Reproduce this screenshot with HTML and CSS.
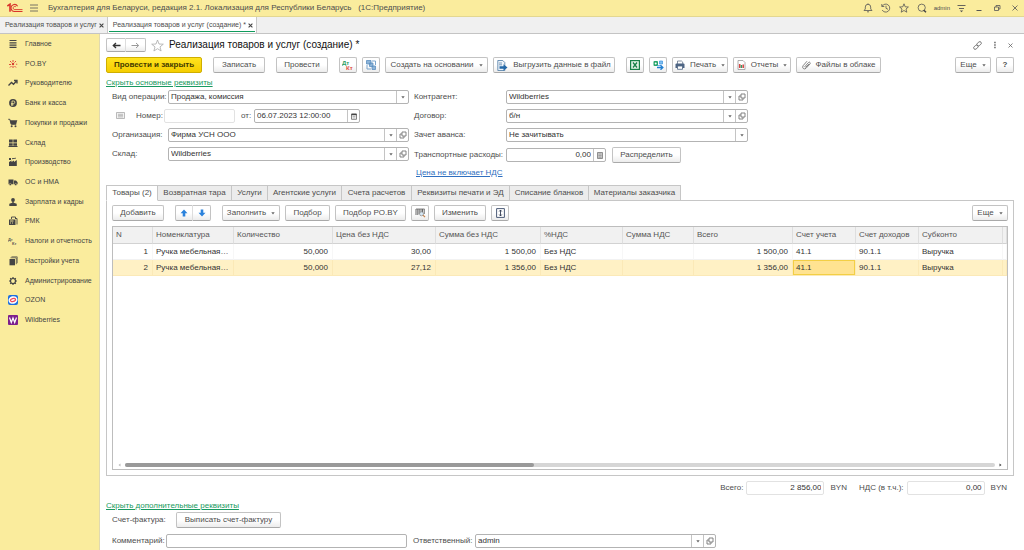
FILE: index.html
```html
<!DOCTYPE html>
<html lang="ru">
<head>
<meta charset="utf-8">
<title>Реализация товаров и услуг (создание)</title>
<link rel="stylesheet" href="styles.css">
</head>
<body>
<svg class="defs" aria-hidden="true">
  <symbol id="caret" viewBox="0 0 4 3"><path d="M.3.3h3.400L2 2.500z" fill="#666"/></symbol>
  <symbol id="open" viewBox="0 0 8 8"><path d="M3 1h4v4H3zM3 3H1v4h4V5" fill="none" stroke="#777" stroke-width=".9"/></symbol>
</svg>

<header class="titlebar">
  <svg class="logo" viewBox="0 0 16 10" role="img" aria-label="1С"><path d="M.3 3 3 1.200V8.800" fill="none" stroke="#d9342b" stroke-width="1.600"/><path d="M10.600 3.300A3.500 3.500 0 1 0 8 8.500H15.500" fill="none" stroke="#d9342b" stroke-width="1.100"/><path d="M9 4A1.600 1.600 0 1 0 8 6.600H15.500" fill="none" stroke="#d9342b" stroke-width=".9"/></svg>
  <button class="icon-btn" aria-label="Меню"><svg width="8" height="8" viewBox="0 0 8 8"><path d="M0 1h8M0 4h8M0 7h8" stroke="#555" fill="none" stroke-width=".8"/></svg></button>
  <span class="app-name">Бухгалтерия для Беларуси, редакция 2.1. Локализация для Республики Беларусь &nbsp; (1С:Предприятие)</span>
  <div class="system">
    <button class="icon-btn" aria-label="Уведомления"><svg width="10" height="10" viewBox="0 0 10 10"><path d="M1 7.500 2.300 6V4a2.700 2.700 0 0 1 5.400 0v2L9 7.500zM4 8.800h2M5 .4v1" fill="none" stroke="#555" stroke-width=".8"/></svg></button>
    <button class="icon-btn" aria-label="История"><svg width="10" height="10" viewBox="0 0 10 10"><path d="M1.200 3.200A4 4 0 1 1 1.200 7M.8 1v2.500h2.500M5 2.700V5.300l2 1" fill="none" stroke="#555" stroke-width=".8"/></svg></button>
    <button class="icon-btn" aria-label="Избранное"><svg width="10" height="10" viewBox="0 0 10 10"><path d="m5 .8 1.200 3 3.200.2L7 6l.8 3.200L5 7.500 2.200 9.200 3 6 .6 4l3.200-.2z" fill="none" stroke="#555" stroke-width=".8"/></svg></button>
    <button class="icon-btn" aria-label="Поиск"><svg width="10" height="10" viewBox="0 0 10 10"><circle cx="4.700" cy="4.700" r="3.600" fill="none" stroke="#555" stroke-width=".8"/><path d="m6.600 7 2.400 2.300" stroke="#444" stroke-width="1.500"/></svg></button>
    <span class="user">admin</span>
    <button class="icon-btn" aria-label="Настройки"><svg width="9" height="9" viewBox="0 0 9 9"><path d="M.5 1.500h8M2 4.500h5" stroke="#555" stroke-width=".9"/><path d="M2.800 6.500h3.400L4.500 8.300z" fill="#555"/></svg></button>
    <button class="icon-btn win" aria-label="Свернуть"><svg width="8" height="8" viewBox="0 0 8 8"><path d="M1.500 6.500h5" stroke="#555"/></svg></button>
    <button class="icon-btn win" aria-label="Развернуть"><svg width="8" height="8" viewBox="0 0 8 8"><path d="M1.500 3h4v3.500h-4zM3 3V1.500h4V5H5.500" fill="none" stroke="#555" stroke-width=".8"/></svg></button>
    <button class="icon-btn win" aria-label="Закрыть"><svg width="8" height="8" viewBox="0 0 8 8"><path d="m1.500 1.500 5 5m0-5-5 5" stroke="#555" stroke-width=".8"/></svg></button>
  </div>
</header>

<nav class="windows" aria-label="Открытые окна">
  <div class="window-tab"><a href="#list">Реализация товаров и услуг</a><button class="close" aria-label="Закрыть вкладку"><svg width="5" height="5" viewBox="0 0 5 5"><path d="m.6.6 3.800 3.800m0-3.800L.6 4.400" stroke="#444" stroke-width="1.100"/></svg></button></div>
  <div class="window-tab current"><a href="#doc">Реализация товаров и услуг (создание) *</a><button class="close" aria-label="Закрыть вкладку"><svg width="5" height="5" viewBox="0 0 5 5"><path d="m.6.6 3.800 3.800m0-3.800L.6 4.400" stroke="#444" stroke-width="1.100"/></svg></button></div>
</nav>

<div class="workspace">
  <nav class="sidebar" aria-label="Разделы">
    <ul>
      <li><a href="#main"><svg viewBox="0 0 10 10"><path d="M1.500 1.500h7M1.500 3.800h7M1.500 6.100h7M1.500 8.400h7" stroke="#444" stroke-width="1.200"/></svg>Главное</a></li>
      <li><a href="#poby"><svg viewBox="0 0 10 10"><path d="M5 1v2M5 7v2M1 5.500h2M2 2l1.500 1.500M8 2 6.500 3.500M2 8.500 3.500 7M8 8.500 6.500 7" stroke="#e04a3c" stroke-width="1"/><circle cx="5" cy="5" r="1.200" fill="#d63a30"/><circle cx="8.600" cy="5.300" r=".8" fill="#e87755"/></svg>PO.BY</a></li>
      <li><a href="#chief"><svg viewBox="0 0 10 10"><path d="M.5 7.500 3.500 4.500l2 1.800 3-3.300M6 2.500h3v3" fill="none" stroke="#444" stroke-width="1.300"/></svg>Руководителю</a></li>
      <li><a href="#bank"><svg viewBox="0 0 10 10"><circle cx="5" cy="5" r="3.900" fill="#444"/><path d="M4 8V3h1.500a1.200 1.200 0 0 1 0 2.600H3M3 6.800h2.500" fill="none" stroke="#faec9d" stroke-width=".8"/></svg>Банк и касса</a></li>
      <li><a href="#trade"><svg viewBox="0 0 10 10"><path d="M.3 1.300h1.500l1.400 5h5" fill="none" stroke="#444" stroke-width="1"/><path d="M2 2.200h7.300L8.200 6H3z" fill="#444"/><circle cx="3.700" cy="8.200" r="1" fill="#444"/><circle cx="7.500" cy="8.200" r="1" fill="#444"/></svg>Покупки и продажи</a></li>
      <li><a href="#stock"><svg viewBox="0 0 10 10"><path d="M1 1.500h3.700v3H1zM5.300 1.500H9v3H5.300zM1 5.200h3.700v2.500H1zM5.300 5.200H9v2.500H5.300zM.5 8.100h9v.9h-9z" fill="#444"/></svg>Склад</a></li>
      <li><a href="#factory"><svg viewBox="0 0 10 10"><path d="M1 9V5l2.500-1.500V5L6 3.500V5L8.800 3v6zM1 1h2v2H1zM4 1.300l4-.6v.8l-4 .8z" fill="#444"/></svg>Производство</a></li>
      <li><a href="#assets"><svg viewBox="0 0 10 10"><path d="M.5 2.500h5v4.700h-5zM6 3.500h2l1.600 1.800v1.900H6z" fill="#444"/><circle cx="2.300" cy="7.500" r="1.100" fill="#444" stroke="#faec9d" stroke-width=".4"/><circle cx="7.700" cy="7.500" r="1.100" fill="#444" stroke="#faec9d" stroke-width=".4"/></svg>ОС и НМА</a></li>
      <li><a href="#salary"><svg viewBox="0 0 10 10"><circle cx="5" cy="3" r="1.900" fill="#444"/><path d="M4.300 4.500h1.400v1.300l3 .9V9H1.300V6.700l3-.9z" fill="#444"/></svg>Зарплата и кадры</a></li>
      <li><a href="#rmk"><svg viewBox="0 0 10 10"><path d="M3.500 3V1h4v2M7 2.500h2v6" fill="none" stroke="#444" stroke-width=".9"/><path d="M1 3.500h6.500V9H1z" fill="#444"/><path d="M2 5h3.500M2 7h1m1 0h1" stroke="#faec9d" stroke-width=".9"/></svg>РМК</a></li>
      <li><a href="#tax"><svg viewBox="0 0 10 10"><text x="0" y="4.500" class="mini-mark">Дт</text><text x="4" y="9" class="mini-mark">Кт</text></svg>Налоги и отчетность</a></li>
      <li><a href="#setup"><svg viewBox="0 0 10 10"><path d="M1.500 3H7v6.300H1.500z" fill="#444"/><path d="M2.500 1.800h5.800v6.400M3.500.8h5.700v6.400" fill="none" stroke="#444" stroke-width=".7"/></svg>Настройки учета</a></li>
      <li><a href="#admin"><svg viewBox="0 0 10 10"><circle cx="5" cy="5" r="2.500" fill="none" stroke="#444" stroke-width="1.200"/><path d="M5 1v1.500M5 7.500V9M1 5h1.500M7.500 5H9M2.200 2.200l1 1M6.800 6.800l1 1M7.800 2.200l-1 1M3.200 6.800l-1 1" stroke="#444" stroke-width="1.200"/></svg>Администрирование</a></li>
      <li><a href="#ozon"><svg viewBox="0 0 10 10"><rect width="10" height="10" rx="2" fill="#1d6fe0"/><ellipse cx="5" cy="5" rx="4.500" ry="3.800" fill="#fff" transform="rotate(-15 5 5)"/><ellipse cx="5" cy="5" rx="2.600" ry="1.500" fill="#fff" stroke="#ef4a5b" stroke-width="1.300" transform="rotate(-15 5 5)"/></svg>OZON</a></li>
      <li><a href="#wb"><svg viewBox="0 0 10 10"><rect width="10" height="10" rx="1" fill="#7d1f8d"/><path d="M1.500 2.500 3.300 7.500 5 3l1.700 4.500L8.500 2.500" fill="none" stroke="#fff" stroke-width="1.200"/></svg>Wildberries</a></li>
    </ul>
  </nav>

  <main class="document">
    <div class="heading">
      <div class="pair">
        <button class="btn" aria-label="Назад"><svg width="9" height="7" viewBox="0 0 9 7"><path d="M8.500 3.500H1.500M4 1 1.300 3.500 4 6" fill="none" stroke="#333" stroke-width="1.300"/></svg></button>
        <button class="btn" aria-label="Вперед"><svg width="9" height="7" viewBox="0 0 9 7"><path d="M.5 3.500h7M5 1l2.700 2.500L5 6" fill="none" stroke="#999" stroke-width="1"/></svg></button>
      </div>
      <button class="icon-btn" aria-label="В избранное"><svg width="13" height="13" viewBox="0 0 13 13"><path d="m6.500 1 1.500 4 4.300.2L9 7.900l1.100 4.100-3.600-2.300L2.900 12 4 7.900.7 5.200 5 5z" fill="#fff" stroke="#aaa" stroke-width=".8"/></svg></button>
      <h1>Реализация товаров и услуг (создание) *</h1>
      <div class="heading-tools">
        <button class="icon-btn" aria-label="Ссылка"><svg width="9" height="9" viewBox="0 0 9 9"><rect x="3.600" y="1.300" width="5" height="3" rx="1.500" fill="none" stroke="#666" stroke-width=".8" transform="rotate(-40 6.100 2.800)"/><rect x=".4" y="4.700" width="5" height="3" rx="1.500" fill="none" stroke="#666" stroke-width=".8" transform="rotate(-40 2.900 6.200)"/></svg></button>
        <button class="icon-btn" aria-label="Действия"><svg width="4" height="8" viewBox="0 0 4 8"><path d="M1.200.8h1.500v1.500H1.200zM1.200 3.300h1.500v1.500H1.200zM1.200 5.800h1.500v1.500H1.200z" fill="#666"/></svg></button>
        <button class="icon-btn" aria-label="Закрыть документ"><svg width="5" height="5" viewBox="0 0 5 5"><path d="m.5.5 4 4m0-4-4 4" stroke="#666" stroke-width=".8"/></svg></button>
      </div>
    </div>

    <div class="commands">
      <button class="btn primary w96">Провести и закрыть</button>
      <span class="gap"></span>
      <button class="btn w52">Записать</button>
      <span class="gap"></span>
      <button class="btn w52">Провести</button>
      <span class="gap"></span>
      <button class="btn w18" aria-label="Проводки"><svg width="12" height="11" viewBox="0 0 12 11"><text x="0" y="5" class="mark-debit">Дт</text><text x="4" y="10" class="mark-credit">Кт</text></svg></button>
      <button class="btn w18" aria-label="Структура подчиненности"><svg width="10" height="10" viewBox="0 0 10 10"><path d="M.5.500h4.500v3.500H.5zM3.500 3h3.500v3.500H3.500zM6 6h3.500v3.500H6z" fill="#8db4d8" stroke="#5c8fc0" stroke-width=".8"/><path d="M1 5v4h4M6 1h3.500v4" fill="none" stroke="#7ba5cd" stroke-width="1"/></svg></button>
      <button class="btn w103">Создать на основании<svg class="caret"><use href="#caret"/></svg></button>
      <button class="btn w122"><svg width="11" height="11" viewBox="0 0 11 11"><path d="M.8.5h5l2 2v8h-7z" fill="#eef4fa" stroke="#4c7aa5" stroke-width=".8"/><path d="M2 3h3M2 4.800h3" stroke="#4c7aa5" stroke-width=".7"/><path d="M2.500 6.200h4V4.300L10.500 7.500l-4 3.200V8.800h-4z" fill="#2468a8"/></svg>Выгрузить данные в файл</button>
      <span class="gap"></span>
      <button class="btn w18" aria-label="Excel"><svg width="10" height="10" viewBox="0 0 10 10"><rect x=".6" y=".6" width="8.800" height="8.800" fill="#e4f3e9" stroke="#188149" stroke-width="1.200"/><path d="m3 2.500 4 5m0-5-4 5" stroke="#188149" stroke-width="1.300"/></svg></button>
      <button class="btn w18" aria-label="Обмен"><svg width="11" height="10" viewBox="0 0 11 10"><rect x=".5" y="1" width="4.500" height="5" rx="1" fill="#28a56b"/><circle cx="2.700" cy="3.500" r="1" fill="#fff"/><path d="M6.500 1h3v3h-3zM4 5.500h4" fill="#83c1f2" stroke="#3c93de" stroke-width=".7"/><path d="M4 7.500h5M7.500 5.300l2.300 2.200-2.300 2.200" fill="none" stroke="#217fd1" stroke-width="1.400"/></svg></button>
      <button class="btn w56"><svg width="10" height="10" viewBox="0 0 10 10"><path d="M2.500 4V1h4L7.700 2v2" fill="#fff" stroke="#65758a" stroke-width=".8"/><path d="M.5 4.500Q.5 3.500 1.500 3.500h7q1 0 1 1V8h-9z" fill="#4e6584"/><path d="M2.500 6h5v3.300h-5z" fill="#fff" stroke="#4e6584" stroke-width=".8"/></svg>Печать<svg class="caret"><use href="#caret"/></svg></button>
      <button class="btn w58"><svg width="9" height="10" viewBox="0 0 9 10"><path d="M1 .5h5l2 2v7H1z" fill="#fff" stroke="#999" stroke-width=".8"/><path d="M2.700 4v4" stroke="#d84545" stroke-width="1.500"/><path d="M4.400 5v3" stroke="#329c63" stroke-width="1.500"/><path d="M6.200 4.500V8" stroke="#d84545" stroke-width="1.500"/></svg>Отчеты<svg class="caret"><use href="#caret"/></svg></button>
      <button class="btn w85"><svg width="9" height="10" viewBox="0 0 9 10"><path d="M2.500 7 6.500 2.500q1-.8 1.500 0t0 1.500L4 8.300q-1.500 1.200-2.700.2T1 5.800L5 1.200M3.500 7.500 7 4" fill="none" stroke="#777" stroke-width=".9"/></svg>Файлы в облаке</button>
      <span class="spacer"></span>
      <button class="btn w36">Еще<svg class="caret"><use href="#caret"/></svg></button>
      <button class="btn w18 help">?</button>
    </div>

    <a class="toggle" href="#main-fields">Скрыть основные реквизиты</a>

    <div class="details">
      <div class="details-col">
        <div class="row"><label class="label-left" for="kind">Вид операции:</label><div class="field"><select id="kind"><option>Продажа, комиссия</option></select><span class="part"><svg class="caret"><use href="#caret"/></svg></span></div></div>
        <div class="row number-row">
          <svg class="state" width="9" height="8" viewBox="0 0 9 8"><path d="M.5.500h8v6h-8z" fill="#f2f2f2" stroke="#aaa" stroke-width=".8"/><path d="M2 2.300h5M2 3.600h5M2 4.900h5" stroke="#999" stroke-width=".6"/></svg>
          <label class="label-number" for="num">Номер:</label><div class="field pale w71"><input id="num" type="text"></div>
          <label class="label-from" for="date">от:</label><div class="field w106"><input id="date" type="text" value="06.07.2023 12:00:00"><button class="part" aria-label="Календарь"><svg width="6" height="7" viewBox="0 0 6 7"><path d="M.5 1h5v5.300h-5z" fill="#fff" stroke="#666" stroke-width=".8"/><path d="M.5 1.500h5" stroke="#444" stroke-width="1.500"/><path d="M1.500 3.500h3M1.500 4.900h3" stroke="#888" stroke-width=".6"/></svg></button></div>
        </div>
        <div class="row"><label class="label-left" for="org">Организация:</label><div class="field"><input id="org" type="text" value="Фирма УСН ООО"><button class="part" aria-label="Выбрать"><svg class="caret"><use href="#caret"/></svg></button><button class="part" aria-label="Открыть"><svg class="open"><use href="#open"/></svg></button></div></div>
        <div class="row"><label class="label-left" for="store">Склад:</label><div class="field"><input id="store" type="text" value="Wildberries"><button class="part" aria-label="Выбрать"><svg class="caret"><use href="#caret"/></svg></button><button class="part" aria-label="Открыть"><svg class="open"><use href="#open"/></svg></button></div></div>
      </div>
      <div class="details-col">
        <div class="row"><label class="label-right" for="party">Контрагент:</label><div class="field"><input id="party" type="text" value="Wildberries"><button class="part" aria-label="Выбрать"><svg class="caret"><use href="#caret"/></svg></button><button class="part" aria-label="Открыть"><svg class="open"><use href="#open"/></svg></button></div></div>
        <div class="row"><label class="label-right" for="deal">Договор:</label><div class="field"><input id="deal" type="text" value="б/н"><button class="part" aria-label="Выбрать"><svg class="caret"><use href="#caret"/></svg></button><button class="part" aria-label="Открыть"><svg class="open"><use href="#open"/></svg></button></div></div>
        <div class="row"><label class="label-right" for="advance">Зачет аванса:</label><div class="field"><select id="advance"><option>Не зачитывать</option></select><span class="part"><svg class="caret"><use href="#caret"/></svg></span></div></div>
        <div class="row tall"><label class="label-right" for="transport">Транспортные расходы:</label><div class="field w100"><input id="transport" class="num" type="text" value="0,00"><button class="part" aria-label="Калькулятор"><svg width="6" height="7" viewBox="0 0 6 7"><path d="M.5.500h5v6h-5z" fill="#ddd" stroke="#777" stroke-width=".8"/><path d="M1.300 2h3.400M1.300 3.700h3.400M1.300 5.200h3.400" stroke="#777" stroke-width=".7"/></svg></button></div><button class="btn w69">Распределить</button></div>
        <a class="price-link" href="#price">Цена не включает НДС</a>
      </div>
    </div>

    <div class="tabs" role="tablist">
      <button class="tab selected" role="tab" aria-selected="true">Товары (2)</button>
      <button class="tab w74" role="tab">Возвратная тара</button>
      <button class="tab w36" role="tab">Услуги</button>
      <button class="tab w74" role="tab">Агентские услуги</button>
      <button class="tab w70" role="tab">Счета расчетов</button>
      <button class="tab w98" role="tab">Реквизиты печати и ЭД</button>
      <button class="tab w79" role="tab">Списание бланков</button>
      <button class="tab w92" role="tab">Материалы заказчика</button>
    </div>
    <section class="panel">
      <div class="commands">
        <button class="btn w52">Добавить</button>
        <span class="gap"></span>
        <div class="pair">
          <button class="btn" aria-label="Вверх"><svg width="8" height="8" viewBox="0 0 8 8"><path d="M4 .5 7.500 4.200H5.300V7.500H2.700V4.200H.5z" fill="#2b82dc"/></svg></button>
          <button class="btn" aria-label="Вниз"><svg width="8" height="8" viewBox="0 0 8 8"><path d="M4 7.500.5 3.800h2.200V.5h2.600v3.300h2.200z" fill="#2b82dc"/></svg></button>
        </div>
        <span class="gap"></span>
        <button class="btn w58">Заполнить<svg class="caret"><use href="#caret"/></svg></button>
        <button class="btn w45">Подбор</button>
        <button class="btn w71">Подбор PO.BY</button>
        <button class="btn w18" aria-label="Штрихкод"><svg width="11" height="10" viewBox="0 0 11 10"><path d="M1 1v6M2.800 1v6M4.200 1v5M6 1v3M7.500 1v3M9.200 1v5" stroke="#666" stroke-width="1"/><path d="M1 1h8.500" stroke="#666" stroke-width=".8"/><circle cx="6.500" cy="5.800" r="2" fill="#d7e8f5" stroke="#888" stroke-width=".7"/><path d="m8 7.200 2 2" stroke="#c7834b" stroke-width="1.200"/></svg></button>
        <button class="btn w52">Изменить</button>
        <button class="btn w18" aria-label="Высота строк"><svg width="9" height="10" viewBox="0 0 9 10"><path d="M.6.600h7.800v8.800H.6z" fill="#fff" stroke="#4d5c78" stroke-width="1"/><path d="M4.500 2v6M3.200 3.500 4.500 2l1.300 1.500M3.200 6.500 4.500 8l1.300-1.500" fill="none" stroke="#333d55" stroke-width=".9"/></svg></button>
        <span class="spacer"></span>
        <button class="btn w36">Еще<svg class="caret"><use href="#caret"/></svg></button>
      </div>
      <div class="grid">
        <table>
          <colgroup><col class="c-n"><col class="c-name"><col class="c-qty"><col class="c-price"><col class="c-sum"><col class="c-rate"><col class="c-vat"><col class="c-total"><col class="c-acc"><col class="c-inc"><col><col class="c-end"></colgroup>
          <thead><tr><th>N</th><th>Номенклатура</th><th>Количество</th><th>Цена без НДС</th><th>Сумма без НДС</th><th>%НДС</th><th>Сумма НДС</th><th>Всего</th><th>Счет учета</th><th>Счет доходов</th><th>Субконто</th><th></th></tr></thead>
          <tbody>
            <tr><td class="num">1</td><td>Ручка мебельная…</td><td class="num">50,000</td><td class="num">30,00</td><td class="num">1 500,00</td><td>Без НДС</td><td></td><td class="num">1 500,00</td><td>41.1</td><td>90.1.1</td><td>Выручка</td><td></td></tr>
            <tr class="active"><td class="num">2</td><td>Ручка мебельная…</td><td class="num">50,000</td><td class="num">27,12</td><td class="num">1 356,00</td><td>Без НДС</td><td></td><td class="num">1 356,00</td><td class="cursor">41.1</td><td>90.1.1</td><td>Выручка</td><td></td></tr>
          </tbody>
        </table>
        <div class="scroll">
          <svg width="3" height="4" viewBox="0 0 3 4"><path d="M2.500.5v3L.5 2z" fill="#bbb"/></svg>
          <div class="track"><div class="thumb"></div></div>
          <svg width="3" height="4" viewBox="0 0 3 4"><path d="M.5.500v3l2-1.500z" fill="#444"/></svg>
        </div>
      </div>
    </section>

    <div class="totals">
      <label for="total">Всего:</label><div class="field pale w78"><input id="total" class="num" type="text" value="2 856,00" readonly></div><span class="currency">BYN</span>
      <label for="vat">НДС (в т.ч.):</label><div class="field pale w78"><input id="vat" class="num" type="text" value="0,00" readonly></div><span class="currency last">BYN</span>
    </div>

    <a class="toggle" href="#more-fields">Скрыть дополнительные реквизиты</a>
    <div class="row invoice"><span class="label-invoice">Счет-фактура:</span><button class="btn w105">Выписать счет-фактуру</button></div>
    <div class="row footer-row">
      <label class="label-comment" for="comment">Комментарий:</label><div class="field"><input id="comment" type="text"></div>
      <label class="label-owner" for="owner">Ответственный:</label><div class="field"><input id="owner" type="text" value="admin"><button class="part" aria-label="Выбрать"><svg class="caret"><use href="#caret"/></svg></button><button class="part" aria-label="Открыть"><svg class="open"><use href="#open"/></svg></button></div>
    </div>
  </main>
</div>
</body>
</html>
```

FILE: styles.css
```css
* { box-sizing: border-box; }

body {
  margin: 0;
  min-height: 100vh;
  display: flex;
  flex-direction: column;
  background: #fff;
  color: #4d4d4d;
  font: 8px/10px "Liberation Sans", Arial, sans-serif;
}

button, input, select {
  margin: 0;
  padding: 0;
  border: 0;
  background: none;
  color: inherit;
  font: inherit;
}

svg { display: block; flex: none; }
.defs { position: absolute; width: 0; height: 0; }
.caret { width: 4px; height: 3px; }
.open { width: 8px; height: 8px; }
.icon-btn { display: flex; align-items: center; justify-content: center; }
.num { text-align: right; }

/* Title bar */
.titlebar {
  height: 17px;
  flex: none;
  display: flex;
  align-items: center;
  padding: 0 4px 0 7px;
  background: #faec9d;
  border-bottom: 1px solid #e3d791;
}
.logo { width: 16px; height: 10px; margin-right: 7px; }
.app-name { margin-left: 10px; white-space: nowrap; }
.system { margin-left: auto; display: flex; align-items: center; gap: 8px; }
.user { margin: 0 -1px; font-size: 6px; }
.win { width: 10px; }

/* Window tabs */
.windows {
  height: 17px;
  flex: none;
  display: flex;
  background: #f0f0f0;
  border-bottom: 1px solid #c4c4c4;
}
.window-tab {
  display: flex;
  align-items: center;
  gap: 2px;
  padding: 0 3px 0 5px;
  border-right: 1px solid #c8c8c8;
  font-size: 7px;
}
.window-tab a { color: inherit; text-decoration: none; white-space: nowrap; }
.window-tab.current {
  background: linear-gradient(#0f9b5c, #0f9b5c) 1px 14px / calc(100% - 2px) 1px no-repeat #fff;
}

.workspace { flex: 1; display: flex; }

/* Sections */
.sidebar {
  width: 100px;
  flex: none;
  background: #faec9d;
  border-right: 1px solid #e0d9b0;
}
.sidebar ul {
  height: 296px;
  margin: 0;
  padding: 0;
  list-style: none;
  display: grid;
  grid-auto-rows: 1fr;
}
.sidebar li { display: flex; align-items: center; }
.sidebar a {
  display: flex;
  align-items: center;
  gap: 7px;
  padding-left: 8px;
  color: #444;
  font-size: 7px;
  text-decoration: none;
  white-space: nowrap;
}
.sidebar svg { width: 10px; height: 10px; }
.mini-mark { font-size: 4px; font-weight: bold; fill: #555; }

/* Document */
.document {
  flex: 1;
  min-width: 0;
  display: flex;
  flex-direction: column;
  padding: 4px 10px 2px 6px;
}
.heading { height: 14px; display: flex; align-items: center; gap: 5px; }
.heading h1 { margin: 0; color: #111; font-size: 10px; font-weight: normal; line-height: 14px; white-space: nowrap; }
.heading-tools { margin-left: auto; margin-right: 1px; display: flex; align-items: center; gap: 11px; }

.btn {
  height: 16px;
  flex: none;
  display: flex;
  align-items: center;
  justify-content: center;
  gap: 5px;
  border: 1px solid #c3c3c3;
  border-bottom-color: #a9a9a9;
  border-radius: 2px;
  background: linear-gradient(#fff, #fff 50%, #ececec);
  white-space: nowrap;
}
.btn.primary {
  border-color: #cfae00;
  background: linear-gradient(#ffe31f, #f5cd00);
  color: #443b00;
  font-weight: bold;
}
.btn.help { font-weight: bold; }
.pair { display: flex; }
.pair .btn { width: 18px; }
.pair .btn:first-child { border-radius: 2px 0 0 2px; border-right-color: #ddd; }
.pair .btn:last-child { border-radius: 0 2px 2px 0; border-left: 0; }
.heading .btn { width: 20px; height: 14px; }

.commands { display: flex; align-items: center; gap: 5px; }
.document > .commands { margin-top: 5px; }
.gap { width: 1px; }
.spacer { flex: 1; }

.w18 { width: 18px; }
.w36 { width: 36px; }
.w45 { width: 45px; }
.w52 { width: 52px; }
.w56 { width: 56px; }
.w58 { width: 58px; }
.w69 { width: 69px; }
.w70 { width: 70px; }
.w71 { width: 71px; }
.w74 { width: 74px; }
.w78 { width: 78px; }
.w79 { width: 79px; }
.w85 { width: 85px; }
.w92 { width: 92px; }
.w96 { width: 96px; }
.w98 { width: 98px; }
.w100 { width: 100px; }
.w103 { width: 103px; }
.w105 { width: 105px; }
.w106 { width: 106px; }
.w122 { width: 122px; }

.mark-debit { font-size: 6px; font-weight: bold; fill: #2b9e63; }
.mark-credit { font-size: 6px; font-weight: bold; fill: #de4c41; }

.toggle { align-self: flex-start; color: #189a60; }
.commands + .toggle { margin-top: 5px; }

/* Fields */
.details { display: flex; gap: 5px; margin-top: 2px; }
.details-col { width: 303px; display: flex; flex-direction: column; gap: 5px; padding-left: 6px; }
.details-col + .details-col { width: 334px; padding-left: 0; }
.row { height: 14px; display: flex; align-items: center; white-space: nowrap; }
.row.tall { height: 16px; }
.label-left { width: 56px; flex: none; }
.label-right { width: 92px; flex: none; }
.state { margin: 0 11px 0 4px; }
.label-number { width: 28px; flex: none; }
.label-from { width: 19px; flex: none; padding-left: 6px; }
.row .w69 { margin-left: 6px; }

.field {
  height: 14px;
  flex: 1;
  min-width: 0;
  display: flex;
  border: 1px solid #b3b3b3;
  border-radius: 2px;
  background: #fff;
}
.field[class*=" w"] { flex: none; }
.field.pale { border-color: #e2e2e2; }
.field input, .field select {
  flex: 1;
  min-width: 0;
  padding: 0 2px;
  appearance: none;
  color: #333;
}
.part {
  width: 12px;
  flex: none;
  display: flex;
  align-items: center;
  justify-content: center;
  border-left: 1px solid #c4c4c4;
}
.price-link { align-self: flex-start; margin-left: 2px; color: #2f6fc0; }

/* Tabbed table */
.tabs { display: flex; margin-top: 7px; z-index: 1; }
.tab {
  height: 16px;
  border: 1px solid #c6c6c6;
  border-left: 0;
  background: #ececec;
  white-space: nowrap;
}
.tab.selected { width: 52px; border-left: 1px solid #c6c6c6; border-bottom-color: #fff; background: #fff; }
.panel {
  flex: 1;
  display: flex;
  flex-direction: column;
  gap: 5px;
  margin-top: -1px;
  padding: 4px 5px 5px;
  border: 1px solid #c6c6c6;
}
.grid {
  flex: 1;
  display: flex;
  flex-direction: column;
  justify-content: space-between;
  border: 1px solid #bdbdbd;
}
table { width: 100%; border-collapse: separate; border-spacing: 0; table-layout: fixed; }
th, td { padding: 0 4px 0 3px; overflow: hidden; text-align: left; font-weight: normal; white-space: nowrap; }
th { height: 17px; border-right: 1px solid #dedede; border-bottom: 1px solid #d2d2d2; background: #f1f1f1; color: #555; }
td { height: 16px; border-right: 1px solid #f7f7f7; border-bottom: 1px solid #f2f2f2; color: #333; }
td.num { text-align: right; }
.active td { border-color: #fbe9b7; background: #fff1c5; }
.active td.cursor { background: #ffe391; box-shadow: inset 0 0 0 1px #f3cf45; }
.c-n { width: 40px; }
.c-name { width: 81px; }
.c-qty { width: 99px; }
.c-price { width: 103px; }
.c-sum { width: 105px; }
.c-rate { width: 82px; }
.c-vat { width: 71px; }
.c-total { width: 99px; }
.c-acc { width: 63px; }
.c-inc { width: 63px; }
.c-end { width: 4px; }

.scroll { display: flex; align-items: center; gap: 4px; padding: 0 5px 2px; }
.track { flex: 1; height: 4px; border-radius: 2px; background: #d6d6d6; }
.thumb { width: 47%; height: 4px; border-radius: 2px; background: #999; }

/* Totals and footer */
.totals { display: flex; align-items: center; justify-content: flex-end; margin-top: 5px; }
.totals label { margin-right: 3px; }
.currency { margin: 0 12px 0 6px; }
.currency.last { margin-right: 7px; }
.totals + .toggle { margin-top: 6px; }
.invoice { height: 16px; margin-top: 1px; padding-left: 6px; }
.label-invoice { width: 64px; }
.footer-row { width: 610px; margin-top: 6px; padding-left: 6px; }
.label-comment { width: 54px; flex: none; }
.label-owner { width: 68px; flex: none; padding-left: 6px; }
```
